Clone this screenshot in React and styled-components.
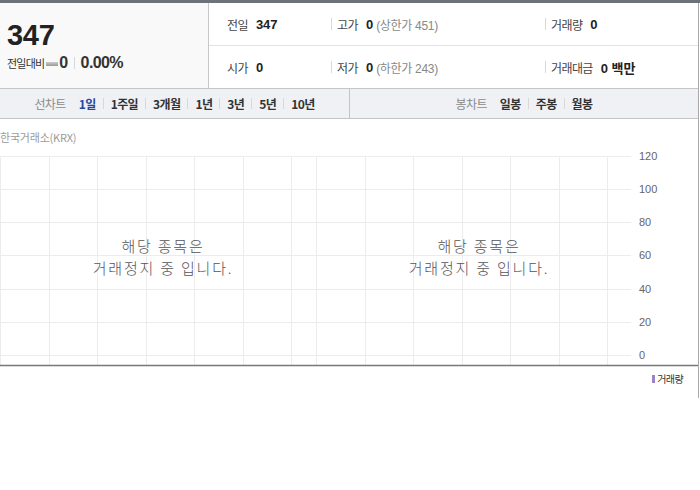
import React from "react";
import styled, { createGlobalStyle } from "styled-components";

const Global = createGlobalStyle`
  html, body { margin: 0; padding: 0; background: #fff; }
  body { font-family: "Liberation Sans", "Noto Sans CJK KR", sans-serif; color: #333; }
`;

const Widget = styled.div`
  width: 700px;
  border-top: 3px solid #6c717a;
`;

const Inner = styled.div`
  width: 699px;
  border-right: 1px solid #a9a9a9;
  box-sizing: border-box;
`;

const Summary = styled.div`
  display: flex;
  height: 85px;
`;

const PricePanel = styled.div`
  width: 209px;
  box-sizing: border-box;
  background: #f9f9f9;
  border-right: 1px solid #c9c9c9;
  padding: 16px 0 0 7px;
`;

const Price = styled.div`
  font-size: 29px;
  line-height: 32px;
  font-weight: bold;
  color: #222;
  letter-spacing: -0.3px;
`;

const ChangeRow = styled.div`
  display: flex;
  align-items: center;
  margin-top: 3px;
  height: 18px;
`;

const SmallLabel = styled.span`
  font-size: 11px;
  letter-spacing: -0.8px;
  color: #333;
  font-family: "Noto Sans CJK KR", sans-serif;
`;

const FlatMark = styled.span`
  display: inline-block;
  width: 12px;
  height: 4px;
  background: linear-gradient(#ccc, #999);
  margin: 1px 1px 0 2px;
`;

const ChangeValue = styled.span`
  font-size: 16px;
  font-weight: bold;
  color: #333;
  letter-spacing: -0.6px;
`;

const VSep = styled.span`
  display: inline-block;
  width: 1px;
  height: ${(p) => p.$h || 12}px;
  background: #d8d8d8;
  margin: 0 ${(p) => p.$m || 6}px 0 ${(p) => (p.$flush ? 0 : p.$m || 6)}px;
`;

const InfoGrid = styled.div`
  flex: 1;
  display: flex;
  flex-direction: column;
`;

const InfoRow = styled.div`
  flex: 1;
  display: flex;
  align-items: center;
  padding-left: 18px;
  border-bottom: ${(p) => (p.$last ? "none" : "1px solid #e3e3e3")};
`;

const InfoCell = styled.div`
  display: flex;
  align-items: center;
  width: ${(p) => (p.$w ? `${p.$w}px` : "auto")};
`;

const Label = styled.span`
  font-family: "Noto Sans CJK KR", sans-serif;
  font-size: 12px;
  color: #444;
  letter-spacing: -0.6px;
  margin-right: 8px;
`;

const Value = styled.span`
  font-size: 13px;
  font-weight: bold;
  color: #222;
  font-family: "Liberation Sans", "Noto Sans CJK KR", sans-serif;
`;

const Limit = styled.span`
  font-size: 12px;
  color: #888;
  margin-left: 3px;
  font-family: "Liberation Sans", "Noto Sans CJK KR", sans-serif;
  letter-spacing: -0.3px;
`;

const TabBar = styled.div`
  display: flex;
  height: 29px;
  border-top: 1px solid #c5c5c5;
  border-bottom: 1px solid #c5c5c5;
  background: #f0f1f5;
`;

const TabGroup = styled.div`
  width: 350px;
  box-sizing: border-box;
  display: flex;
  align-items: center;
  justify-content: center;
  border-left: ${(p) => (p.$divider ? "1px solid #c5c5c5" : "none")};
`;

const TabTitle = styled.span`
  font-family: "Noto Sans CJK KR", sans-serif;
  font-size: 12px;
  color: #8a8a8a;
  letter-spacing: -0.6px;
  margin-right: 13px;
`;

const Tab = styled.span`
  font-family: "Noto Sans CJK KR", sans-serif;
  font-size: 12px;
  font-weight: bold;
  letter-spacing: -0.6px;
  color: ${(p) => (p.$active ? "#2447a0" : "#333")};
`;

const Source = styled.div`
  font-family: "Noto Sans CJK KR", sans-serif;
  font-size: 11px;
  color: #9a9a9a;
  height: 28px;
  line-height: 18px;
  padding-top: 9px;
  box-sizing: border-box;
  letter-spacing: -0.2px;
`;

const ChartArea = styled.div`
  position: relative;
  height: 220px;
`;

const ChartSvg = styled.svg`
  display: block;
`;

const Notice = styled.div`
  position: absolute;
  top: 88px;
  left: ${(p) => p.$left}px;
  width: 316px;
  text-align: center;
  font-family: "Noto Sans CJK KR", sans-serif;
  font-size: 15px;
  line-height: 22px;
  letter-spacing: 1.8px;
  color: #555;
  font-weight: 300;
`;

const Legend = styled.div`
  display: flex;
  justify-content: flex-end;
  align-items: center;
  height: 31px;
  padding: 0 15px 8px 0;
  box-sizing: border-box;
`;

const LegendSwatch = styled.span`
  width: 3px;
  height: 8px;
  background: #9a85c8;
  margin-right: 2px;
`;

const LegendText = styled.span`
  font-family: "Noto Sans CJK KR", sans-serif;
  font-size: 10px;
  color: #333;
  letter-spacing: -0.6px;
`;

const periods = ["1일", "1주일", "3개월", "1년", "3년", "5년", "10년"];
const candles = ["일봉", "주봉", "월봉"];

function TabList({ items, active }) {
  return items.map((t, i) => (
    <React.Fragment key={t}>
      {i > 0 && <VSep $h={11} $m={7} />}
      <Tab $active={t === active}>{t}</Tab>
    </React.Fragment>
  ));
}

function Chart() {
  const vx = [];
  [0, 316].forEach((base) => {
    for (let k = 0; k <= 6; k++) vx.push(Math.round(base + 48.5 * k) + 0.5);
  });
  const hy = [9, 42, 75, 108, 142, 175, 208];
  const labels = ["120", "100", "80", "60", "40", "20", "0"];
  return (
    <ChartSvg width="698" height="220" viewBox="0 0 698 220">
      {hy.map((y) => (
        <line key={"h" + y} x1="0" x2="631" y1={y + 0.5} y2={y + 0.5} stroke="#ececec" strokeWidth="1" />
      ))}
      {vx.map((x) => (
        <line key={"v" + x} x1={x} x2={x} y1="9" y2="218" stroke="#ececec" strokeWidth="1" />
      ))}
      <line x1="0" x2="698" y1="218.5" y2="218.5" stroke="#777" strokeWidth="1.3" />
      {hy.map((y, i) => (
        <text
          key={"t" + y}
          x="639"
          y={y + 4}
          fontSize="11"
          fill="#666"
          fontFamily="Liberation Sans, sans-serif"
        >
          {labels[i]}
        </text>
      ))}
    </ChartSvg>
  );
}

function InfoItem({ label, value, limit, width, sep }) {
  return (
    <InfoCell $w={width}>
      {sep && <VSep $h={12} $m={5} $flush />}
      <Label>{label}</Label>
      <Value>{value}</Value>
      {limit && <Limit>{limit}</Limit>}
    </InfoCell>
  );
}

export default function App() {
  return (
    <>
      <Global />
      <Widget>
        <Inner>
          <Summary>
            <PricePanel>
              <Price>347</Price>
              <ChangeRow>
                <SmallLabel>전일대비</SmallLabel>
                <FlatMark />
                <ChangeValue>0</ChangeValue>
                <VSep $h={12} $m={6} />
                <ChangeValue>0.00%</ChangeValue>
              </ChangeRow>
            </PricePanel>
            <InfoGrid>
              <InfoRow>
                <InfoItem width={104} label="전일" value="347" />
                <InfoItem width={214} sep label="고가" value="0" limit="(상한가 451)" />
                <InfoItem sep label="거래량" value="0" />
              </InfoRow>
              <InfoRow $last>
                <InfoItem width={104} label="시가" value="0" />
                <InfoItem width={214} sep label="저가" value="0" limit="(하한가 243)" />
                <InfoItem sep label="거래대금" value="0 백만" />
              </InfoRow>
            </InfoGrid>
          </Summary>
          <TabBar>
            <TabGroup>
              <TabTitle>선차트</TabTitle>
              <TabList items={periods} active="1일" />
            </TabGroup>
            <TabGroup $divider>
              <TabTitle>봉차트</TabTitle>
              <TabList items={candles} active="" />
            </TabGroup>
          </TabBar>
          <Source>한국거래소(KRX)</Source>
          <ChartArea>
            <Chart />
            <Notice $left={5}>
              해당 종목은
              <br />
              거래정지 중 입니다.
            </Notice>
            <Notice $left={321}>
              해당 종목은
              <br />
              거래정지 중 입니다.
            </Notice>
          </ChartArea>
          <Legend>
            <LegendSwatch />
            <LegendText>거래량</LegendText>
          </Legend>
        </Inner>
      </Widget>
    </>
  );
}
